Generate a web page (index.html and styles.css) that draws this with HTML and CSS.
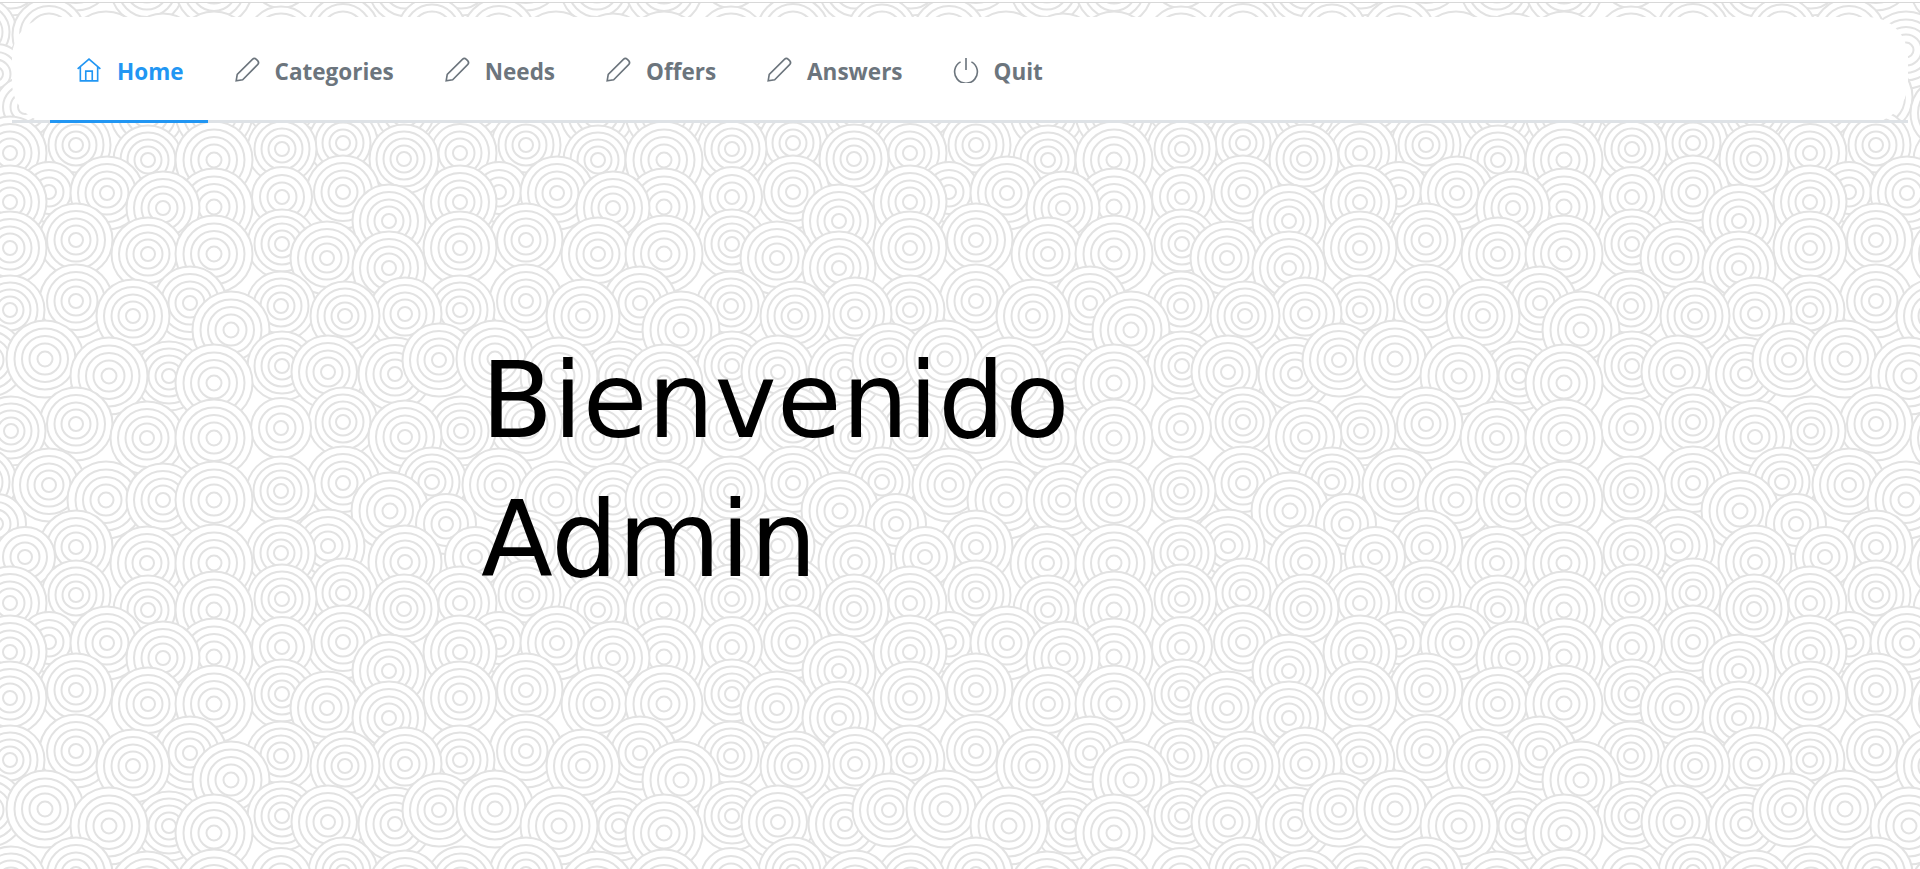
FILE: index.html
```html
<!DOCTYPE html>
<html lang="en">
<head>
    <meta charset="UTF-8">
    <meta name="viewport" content="width=device-width, initial-scale=1.0">
    <title>Bienvenido</title>
    <link rel="stylesheet" href="styles.css">
</head>
<body>
    <nav class="navbar">
        <ul class="tabs">
            <li><a class="tab active" href="#">
                <svg class="icon" viewBox="0 0 24 24"><path d="M1.5 11 12 2l10.5 9M4 9v13h16V9M9 22v-9h6v9"/></svg>
                Home</a></li>
            <li><a class="tab" href="#">
                <svg class="icon" viewBox="0 0 24 24"><path d="M2 22l1-6L17 2.2c1-1 2.600-1 3.600 0l1.200 1.200c1 1 1 2.600 0 3.600L8 21z"/></svg>
                Categories</a></li>
            <li><a class="tab" href="#">
                <svg class="icon" viewBox="0 0 24 24"><path d="M2 22l1-6L17 2.2c1-1 2.600-1 3.600 0l1.200 1.200c1 1 1 2.600 0 3.600L8 21z"/></svg>
                Needs</a></li>
            <li><a class="tab" href="#">
                <svg class="icon" viewBox="0 0 24 24"><path d="M2 22l1-6L17 2.2c1-1 2.600-1 3.600 0l1.200 1.200c1 1 1 2.600 0 3.600L8 21z"/></svg>
                Offers</a></li>
            <li><a class="tab" href="#">
                <svg class="icon" viewBox="0 0 24 24"><path d="M2 22l1-6L17 2.2c1-1 2.600-1 3.600 0l1.200 1.200c1 1 1 2.600 0 3.600L8 21z"/></svg>
                Answers</a></li>
            <li><a class="tab" href="#">
                <svg class="icon" viewBox="0 0 24 24"><path d="M7 4.500a10.500 10.500 0 1 0 10 0M12 1v11"/></svg>
                Quit</a></li>
        </ul>
    </nav>

    <main class="welcome">
        <h1>Bienvenido<br>Admin</h1>
    </main>
</body>
</html>
```

FILE: styles.css
```css
html {
    height: 100%;
    background: white;
}
body {
    margin: 2px 0 0;
    padding: 14px 12px 0;
    min-height: 100%;
    box-sizing: border-box;
    overflow: hidden;
    border-top: 1px solid #d8d8d8;
    font-family: "Open Sans", "Noto Sans", sans-serif;
    background-color: white;
    background-position: 0 117px;
    background-image: url("data:image/svg+xml,<svg xmlns='http://www.w3.org/2000/svg' width='450' height='450' viewBox='0 0 450 450'>\
<defs>\
<filter id='soft'><feGaussianBlur stdDeviation='0.450'/></filter>\
<g id='a' fill='white' stroke='%23e2e2e2' stroke-width='2'><circle r='38.500'/><circle r='30.500'/><circle r='23'/><circle r='15.500'/><circle r='7.500'/></g>\
<g id='b' fill='white' stroke='%23e2e2e2' stroke-width='2'><circle r='36.500'/><circle r='29'/><circle r='21.500'/><circle r='14.500'/><circle r='7'/></g>\
<g id='c' fill='white' stroke='%23e2e2e2' stroke-width='2'><circle r='34.500'/><circle r='27.500'/><circle r='20.500'/><circle r='13.500'/><circle r='7'/></g>\
<g id='d' fill='white' stroke='%23e2e2e2' stroke-width='2'><circle r='30'/><circle r='22'/><circle r='14.500'/><circle r='7'/></g>\
<g id='all'>\
<use href='%23c' x='343' y='23'/><use href='%23c' x='76' y='25'/><use href='%23c' x='282' y='29'/><use href='%23b' x='10' y='33'/><use href='%23b' x='460' y='33'/><use href='%23c' x='404' y='39'/><use href='%23c' x='148' y='40'/><use href='%23a' x='214' y='40'/>\
<use href='%23b' x='343' y='72'/><use href='%23d' x='49' y='72'/><use href='%23b' x='107' y='73'/><use href='%23d' x='282' y='77'/><use href='%23b' x='10' y='82'/><use href='%23b' x='460' y='82'/><use href='%23a' x='214' y='87'/><use href='%23b' x='163' y='88'/><use href='%23b' x='389' y='101'/>\
<use href='%23b' x='76' y='120'/><use href='%23c' x='282' y='124'/><use href='%23b' x='10' y='128'/><use href='%23b' x='460' y='128'/><use href='%23b' x='148' y='134'/><use href='%23a' x='214' y='134'/><use href='%23b' x='327' y='138'/><use href='%23b' x='389' y='148'/>\
<use href='%23b' x='76' y='181'/><use href='%23b' x='190' y='183'/><use href='%23c' x='281' y='186'/><use href='%23c' x='10' y='190'/><use href='%23c' x='460' y='190'/><use href='%23b' x='405' y='194'/><use href='%23b' x='133' y='196'/><use href='%23c' x='345' y='196'/><use href='%23a' x='231' y='210'/>\
<use href='%23c' x='282' y='246'/><use href='%23b' x='328' y='252'/><use href='%23b' x='395' y='254'/><use href='%23b' x='439' y='240'/><use href='%23b' x='-11' y='240'/><use href='%23a' x='45' y='239'/><use href='%23a' x='495' y='239'/><use href='%23c' x='169' y='256'/><use href='%23a' x='109' y='256'/><use href='%23a' x='214' y='263'/>\
<use href='%23c' x='343' y='302'/><use href='%23b' x='76' y='304'/><use href='%23d' x='281' y='308'/><use href='%23c' x='11' y='311'/><use href='%23c' x='461' y='311'/><use href='%23b' x='405' y='317'/><use href='%23b' x='147' y='318'/><use href='%23a' x='214' y='318'/>\
<use href='%23c' x='432' y='362'/><use href='%23c' x='-18' y='362'/><use href='%23b' x='343' y='363'/><use href='%23b' x='49' y='365'/><use href='%23c' x='281' y='371'/><use href='%23a' x='106' y='380'/><use href='%23b' x='163' y='380'/><use href='%23a' x='214' y='380'/><use href='%23a' x='390' y='391'/><use href='%23d' x='446' y='404'/><use href='%23d' x='-4' y='404'/>\
<use href='%23b' x='328' y='426'/><use href='%23b' x='76' y='427'/><use href='%23c' x='281' y='433'/><use href='%23d' x='25' y='437'/><use href='%23d' x='475' y='437'/><use href='%23b' x='405' y='442'/><use href='%23b' x='147' y='443'/><use href='%23a' x='214' y='443'/>\
</g></defs>\
<g filter='url(%23soft)'><use href='%23all' y='-450'/><use href='%23all'/><use href='%23all' y='450'/></g></svg>");
}

.navbar {
    background: white;
    border-radius: 40px;
}
.tabs {
    display: flex;
    list-style: none;
    margin: 0;
    padding: 0 0 0 38px;
    border-bottom: 3px solid #dee2e6;
}
.tabs li {
    margin-bottom: -3px;
}
.tab {
    display: flex;
    align-items: center;
    gap: 15px;
    height: 98px;
    padding: 5px 24px 0 26px;
    font-size: 22.500px;
    font-weight: 700;
    color: #6c757d;
    text-decoration: none;
    border-bottom: 3px solid transparent;
}
.tab.active {
    color: #2196f3;
    border-bottom-color: #2196f3;
}
.icon {
    width: 26px;
    height: 26px;
    margin-bottom: 3px;
    fill: none;
    stroke: currentColor;
    stroke-width: 1.500;
}

.welcome {
    padding: 209px 0 0 469px;
}
.welcome h1 {
    margin: 0;
    font-family: "DejaVu Sans", sans-serif;
    font-size: 105px;
    font-weight: 400;
    letter-spacing: 0.300px;
    line-height: 139px;
    color: black;
}
```
